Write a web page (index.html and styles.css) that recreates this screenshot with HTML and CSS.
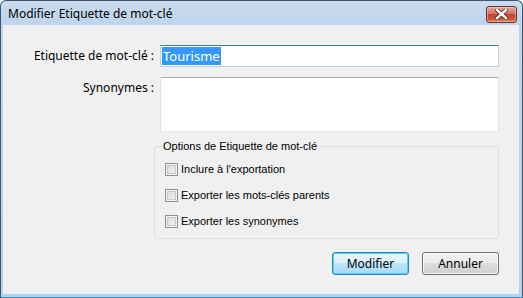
FILE: index.html
```html
<!DOCTYPE html>
<html lang="fr">
<head>
    <meta charset="UTF-8">
    <title>Modifier Etiquette de mot-clé</title>
    <link rel="stylesheet" href="styles.css">
</head>
<body>
    <div class="window">
        <div class="titlebar">
            <span class="title">Modifier Etiquette de mot-clé</span>
            <button class="close" aria-label="Fermer">
                <svg width="13" height="10" viewBox="0 0 13 10">
                    <path d="M2 1 L11 9 M11 1 L2 9" stroke="#4a2a26" stroke-width="4" stroke-linecap="square"/>
                    <path d="M2 1 L11 9 M11 1 L2 9" stroke="#ffffff" stroke-width="2.4" stroke-linecap="square"/>
                </svg>
            </button>
        </div>
        <div class="client">
            <div class="form">
                <label class="label">Etiquette de mot-clé :</label>
                <div class="field input"><span class="sel">Tourisme</span></div>
                <label class="label">Synonymes :</label>
                <div class="field textarea"></div>
            </div>

            <fieldset class="options">
                <legend>Options de Etiquette de mot-clé</legend>
                <div class="check"><span class="box"></span>Inclure à l'exportation</div>
                <div class="check"><span class="box"></span>Exporter les mots-clés parents</div>
                <div class="check"><span class="box"></span>Exporter les synonymes</div>
            </fieldset>

            <div class="actions">
                <button class="btn default">Modifier</button>
                <button class="btn">Annuler</button>
            </div>
        </div>
    </div>
</body>
</html>
```

FILE: styles.css
```css
body {
    margin: 0;
    padding: 0;
    font-family: 'Noto Sans', sans-serif;
    font-size: 12px;
    color: #000;
    background: #fff;
}
.window {
    width: 523px;
    height: 298px;
    box-sizing: border-box;
    display: flex;
    flex-direction: column;
    border: 1px solid #3d5772;
    border-bottom-color: #1c9ad6;
    border-radius: 6px 6px 0 0;
    background: linear-gradient(#c9dbef, #bcd3ec 30px, #b9d1ea);
    padding: 0 2px 2px 2px;
}
.titlebar {
    height: 24px;
    display: flex;
    align-items: center;
    justify-content: space-between;
}
.title {
    padding-left: 5px;
    padding-top: 1px;
    color: #000;
}
.close {
    width: 31px;
    height: 17px;
    margin: 2px 3px 0 0;
    padding: 0;
    border: 1px solid #6b2d24;
    border-radius: 3px;
    background: linear-gradient(#e8a89c, #d0725f 45%, #c0462c 50%, #c7573a 80%, #dc8866);
    box-shadow: inset 0 0 0 1px rgba(255, 255, 255, 0.35);
    display: flex;
    align-items: center;
    justify-content: center;
}
.client {
    flex: 1;
    background: #f0f0f0;
    margin-right: 1px;
    border-bottom: 1px solid #a5d7ef;
    padding: 20px 20px 0 0;
}
.form {
    display: grid;
    grid-template-columns: 151px 339px;
    grid-template-rows: 22px 55px;
    column-gap: 6px;
    row-gap: 10px;
}
.label {
    text-align: right;
    line-height: 22px;
    color: #000;
}
.field {
    box-sizing: border-box;
    background: #fff;
}
.input {
    border: 1px solid #b5d3ea;
    border-top-color: #3d7bad;
    padding: 1px;
}
.sel {
    display: inline-block;
    height: 18px;
    line-height: 18px;
    padding: 0 1px;
    background: #3399ff;
    color: #fff;
    font-size: 13px;
}
.textarea {
    border: 1px solid #e2e3ea;
    border-top-color: #abadb3;
    border-bottom-color: #e3e9ef;
}
.options {
    margin: 8px 0 0 151px;
    width: 345px;
    box-sizing: border-box;
    padding: 3px 10px 4px 10px;
    border: 1px solid #d5dfe5;
    border-radius: 3px;
    font-family: 'Liberation Sans', sans-serif;
    font-size: 11px;
}
.options legend {
    margin-left: -4px;
    padding: 0 2px;
    line-height: 13px;
    color: #000;
}
.check {
    height: 26px;
    display: flex;
    align-items: center;
    gap: 3px;
    color: #000;
}
.box {
    width: 11px;
    height: 11px;
    border: 1px solid #8e8f8f;
    background: linear-gradient(135deg, #d6d6d6, #f6f6f6);
    box-shadow: inset 0 0 0 1px #f4f4f4, inset 0 0 0 2px #c7c7c7;
}
.actions {
    display: flex;
    justify-content: flex-end;
    gap: 13px;
    margin-top: 13px;
}
.btn {
    width: 77px;
    height: 23px;
    padding: 0;
    font-family: 'Noto Sans', sans-serif;
    font-size: 12px;
    color: #000;
    border: 1px solid #707070;
    border-radius: 3px;
    background: linear-gradient(#f2f2f2, #ebebeb 50%, #dddddd 50%, #cfcfcf);
    box-shadow: inset 0 0 0 1px rgba(255, 255, 255, 0.7);
}
.btn.default {
    border-color: #3c7fb1;
    background: linear-gradient(#eaf6fd, #d9f0fc 50%, #bee6fd 50%, #a7d9f5);
    box-shadow: inset 0 0 0 1px #48d2fb;
}
```
